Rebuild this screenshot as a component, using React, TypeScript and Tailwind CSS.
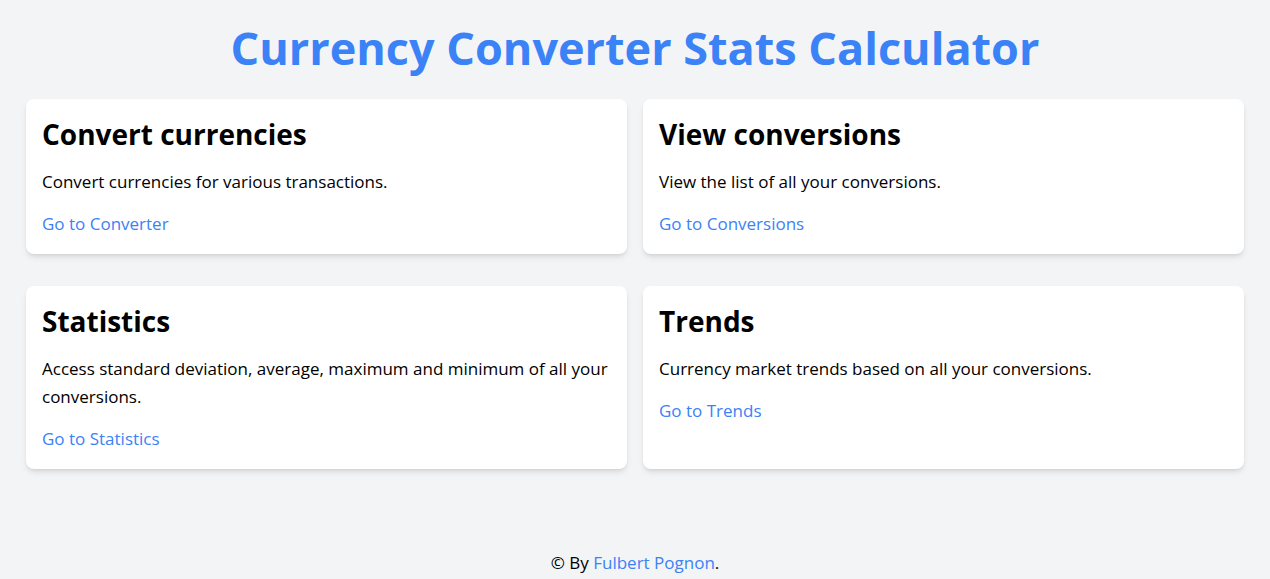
import React from 'react';

const cards = [
  {
    title: 'Convert currencies',
    text: 'Convert currencies for various transactions.',
    link: 'Go to Converter',
  },
  {
    title: 'View conversions',
    text: 'View the list of all your conversions.',
    link: 'Go to Conversions',
  },
  {
    title: 'Statistics',
    text: 'Access standard deviation, average, maximum and minimum of all your conversions.',
    link: 'Go to Statistics',
  },
  {
    title: 'Trends',
    text: 'Currency market trends based on all your conversions.',
    link: 'Go to Trends',
  },
];

export default function App() {
  return (
    <div
      className="min-h-screen flex flex-col bg-[#f3f4f6] text-black"
      style={{ fontFamily: '"Open Sans", "Noto Sans", sans-serif' }}
    >
      <main className="flex-1 px-[26px]">
        <h1 className="pt-6 mb-[27px] text-center text-[45px] leading-[48px] font-bold text-[#3b82f6]">
          Currency Converter Stats Calculator
        </h1>

        <div className="grid grid-cols-2 gap-x-4 gap-y-8">
          {cards.map((c) => (
            <div key={c.title} className="bg-white rounded-lg shadow-md p-4">
              <h2 className="text-[28px] leading-9 font-bold pt-px mb-4">{c.title}</h2>
              <p className="text-[17px] leading-7 mb-3.5">{c.text}</p>
              <a href="#" className="text-[17px] leading-7 text-[#3b82f6]">
                {c.link}
              </a>
            </div>
          ))}
        </div>
      </main>

      {/* footer */}
      <footer className="text-center text-[17px] leading-7 pb-0.5">
        © By <a href="#" className="text-[#3b82f6]">Fulbert Pognon</a>.
      </footer>
    </div>
  );
}
